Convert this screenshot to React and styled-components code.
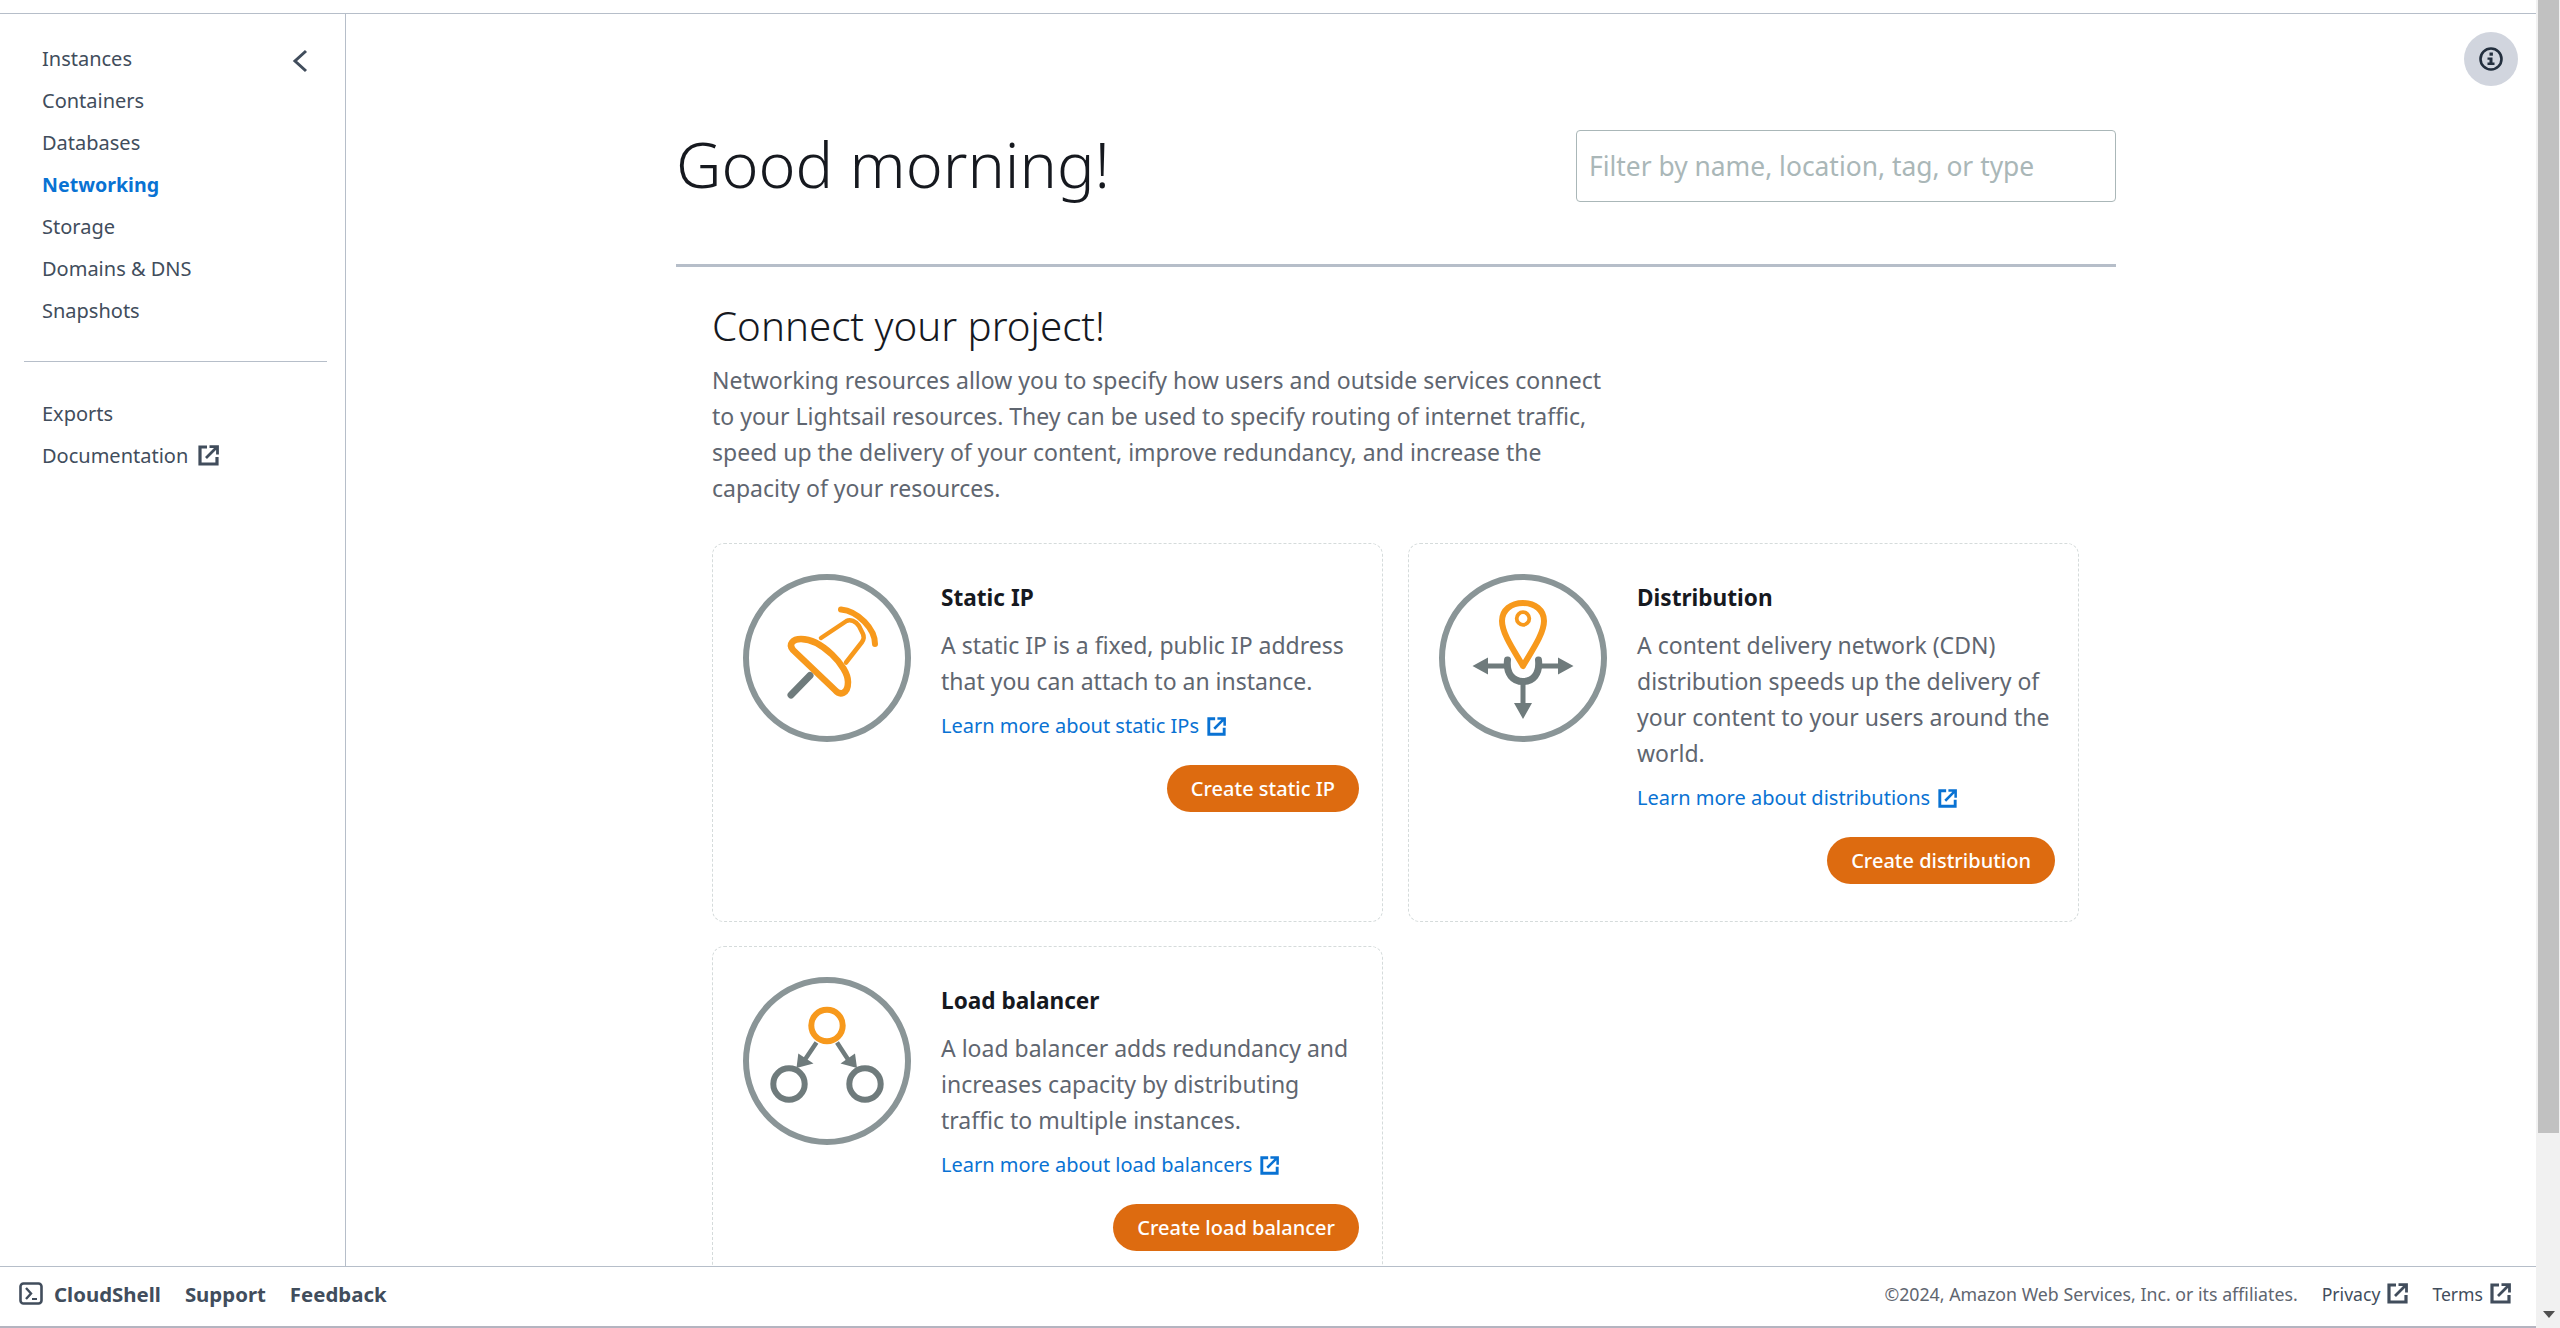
import React from 'react'
import styled, { createGlobalStyle } from 'styled-components'

const GlobalStyle = createGlobalStyle`
	html, body {
		margin: 0;
		padding: 0;
		height: 100%;
		overflow: hidden;
		background: #fff;
	}
	* {
		box-sizing: border-box;
	}
	body {
		font-family: "Noto Sans", "Open Sans", sans-serif;
	}
`

function ExternalIcon({ size = 21 }) {
	return (
		<svg width={size} height={size} viewBox="0 0 21 21" fill="none" stroke="currentColor" strokeWidth="3.2">
			<path d="M9 2H2v17h17v-7" />
			<path d="M8 13L18 3M11.5 1.6h8v8" strokeWidth="2.8" />
		</svg>
	)
}

function StaticIpIcon() {
	return (
		<svg width="168" height="168" viewBox="0 0 168 168" fill="none">
			<circle cx="84" cy="84" r="81" stroke="#8a9597" strokeWidth="6" />
			<path d="M48 121L67 101.5" stroke="#6f7b7c" strokeWidth="7" strokeLinecap="round" />
			<path d="M50 76C45 70 50 65 58 65C78 65 105 92 105 108C105 120 97 122 92 116Z" stroke="#f7991c" strokeWidth="6.5" strokeLinejoin="round" />
			<path d="M78 64L103.5 47C107 45 113 47 116 52L120 60C121.5 63 121 65 119 68L103 88.5" stroke="#f7991c" strokeWidth="4.5" strokeLinecap="round" strokeLinejoin="round" />
			<path d="M98 35.5C115 37 132 55 132 70" stroke="#f7991c" strokeWidth="6" strokeLinecap="round" />
		</svg>
	)
}

function DistributionIcon() {
	return (
		<svg width="168" height="168" viewBox="0 0 168 168" fill="none">
			<circle cx="84" cy="84" r="81" stroke="#8a9597" strokeWidth="6" />
			<path d="M68.5 86C67 100 74 107.5 84 107.5C94 107.5 101 100 99.5 86" stroke="#6f7b7c" strokeWidth="7" strokeLinecap="round" />
			<path d="M46 92H67M101 92H122M84 108V132" stroke="#6f7b7c" strokeWidth="5" />
			<path d="M33.5 92L49 83.5V100.5Z M134.5 92L119 83.5V100.5Z M84 145L75 129H93Z" fill="#6f7b7c" />
			<path d="M84 92C76 78 63 60 63 47C63 36 72 29 84 29C96 29 105 36 105 47C105 60 92 78 84 92Z" stroke="#f7991c" strokeWidth="6" strokeLinejoin="round" />
			<circle cx="84" cy="44.5" r="6.3" stroke="#f7991c" strokeWidth="3.8" />
		</svg>
	)
}

function LoadBalancerIcon() {
	return (
		<svg width="168" height="168" viewBox="0 0 168 168" fill="none">
			<circle cx="84" cy="84" r="81" stroke="#8a9597" strokeWidth="6" />
			<circle cx="84" cy="48.5" r="15.7" stroke="#f7991c" strokeWidth="6" />
			<circle cx="46" cy="107" r="15.7" stroke="#6f7b7c" strokeWidth="6" />
			<circle cx="122" cy="107" r="15.7" stroke="#6f7b7c" strokeWidth="6" />
			<path d="M73.5 65.5L60 85.5M94 65.5L107 85.5" stroke="#6f7b7c" strokeWidth="4.5" />
			<path d="M53.5 91L55.3 76.5L70.5 86.5Z M114 91L112 76.5L97.5 86.5Z" fill="#6f7b7c" />
		</svg>
	)
}

const cards = [
	{
		title: 'Static IP',
		Icon: StaticIpIcon,
		text: 'A static IP is a fixed, public IP address that you can attach to an instance.',
		link: 'Learn more about static IPs',
		action: 'Create static IP',
	},
	{
		title: 'Distribution',
		Icon: DistributionIcon,
		text: 'A content delivery network (CDN) distribution speeds up the delivery of your content to your users around the world.',
		link: 'Learn more about distributions',
		action: 'Create distribution',
	},
	{
		title: 'Load balancer',
		Icon: LoadBalancerIcon,
		text: 'A load balancer adds redundancy and increases capacity by distributing traffic to multiple instances.',
		link: 'Learn more about load balancers',
		action: 'Create load balancer',
	},
]

const navTop = ['Instances', 'Containers', 'Databases', 'Networking', 'Storage', 'Domains & DNS', 'Snapshots']

function App() {
	return (
		<StyledPage>
			<GlobalStyle />
			<StyledWindow>
				<StyledBody>
					<StyledSidebar>
						<StyledCollapse aria-label="Collapse">
							<svg width="16" height="24" viewBox="0 0 16 24" fill="none" stroke="#414d5c" strokeWidth="3">
								<path d="M14 2L3 12l11 10" />
							</svg>
						</StyledCollapse>
						<StyledNavList>
							{navTop.map((item) => (
								<StyledNavItem key={item} $active={item === 'Networking'}>
									{item}
								</StyledNavItem>
							))}
						</StyledNavList>
						<StyledNavDivider />
						<StyledNavList>
							<StyledNavItem>Exports</StyledNavItem>
							<StyledNavItem>
								Documentation <ExternalIcon />
							</StyledNavItem>
						</StyledNavList>
					</StyledSidebar>
					<StyledMain>
						<StyledInfoButton aria-label="Info">
							<svg width="24" height="24" viewBox="0 0 24 24" fill="none">
								<circle cx="12" cy="12" r="10.5" stroke="#232f3e" strokeWidth="2.6" />
								<rect x="10.5" y="5.5" width="3.4" height="3.2" fill="#232f3e" />
								<path d="M8.5 10.5h5v5h2v2.5h-7v-2.5h2v-2.7h-2z" fill="#232f3e" />
							</svg>
						</StyledInfoButton>
						<StyledContent>
							<StyledHeader>
								<StyledGreeting>Good morning!</StyledGreeting>
								<StyledFilter placeholder="Filter by name, location, tag, or type" />
							</StyledHeader>
							<StyledPanel>
								<StyledPanelTitle>Connect your project!</StyledPanelTitle>
								<StyledIntro>
									Networking resources allow you to specify how users and outside services connect to your Lightsail resources. They can be used to specify routing of internet traffic, speed up the delivery of your content, improve redundancy, and increase the capacity of your resources.
								</StyledIntro>
								<StyledCardGrid>
									{cards.map(({ title, Icon, text, link, action }) => (
										<StyledCard key={title}>
											<StyledCardIcon>
												<Icon />
											</StyledCardIcon>
											<StyledCardBody>
												<StyledCardTitle>{title}</StyledCardTitle>
												<StyledCardText>{text}</StyledCardText>
												<StyledCardLink>
													{link} <ExternalIcon size={19} />
												</StyledCardLink>
												<StyledCardAction>{action}</StyledCardAction>
											</StyledCardBody>
										</StyledCard>
									))}
								</StyledCardGrid>
							</StyledPanel>
						</StyledContent>
					</StyledMain>
				</StyledBody>
				<StyledFooter>
					<StyledFooterLeft>
						<svg width="24" height="23" viewBox="0 0 24 23" fill="none" stroke="#414d5c">
							<rect x="1.5" y="1.5" width="21" height="20" rx="3" strokeWidth="2.6" />
							<path d="M7 6l5 5.5L7 17" strokeWidth="2.4" />
							<path d="M13 17h5" strokeWidth="2" />
						</svg>
						<StyledFooterStrong $first>CloudShell</StyledFooterStrong>
						<StyledFooterStrong>Support</StyledFooterStrong>
						<StyledFooterStrong>Feedback</StyledFooterStrong>
					</StyledFooterLeft>
					<StyledFooterRight>
						<StyledCopyright>©2024, Amazon Web Services, Inc. or its affiliates.</StyledCopyright>
						<StyledFooterLink>
							Privacy <ExternalIcon />
						</StyledFooterLink>
						<StyledFooterLink>
							Terms <ExternalIcon />
						</StyledFooterLink>
					</StyledFooterRight>
				</StyledFooter>
			</StyledWindow>
			<StyledScrollbar>
				<StyledThumb />
				<StyledScrollSpace />
				<StyledArrow />
			</StyledScrollbar>
		</StyledPage>
	)
}

const StyledPage = styled.div`
	width: 100%;
	height: 100vh;
	display: flex;
	overflow: hidden;
`
const StyledWindow = styled.div`
	flex: 1;
	min-width: 0;
	display: flex;
	flex-direction: column;
	padding-top: 13px;
	border-bottom: 2px solid #b4b4c0;
`
const StyledBody = styled.div`
	flex: 1;
	min-height: 0;
	display: flex;
	border-top: 1px solid #b6bec9;
`
const StyledSidebar = styled.aside`
	position: relative;
	width: 346px;
	flex-shrink: 0;
	padding: 23px 0 0 42px;
	border-right: 1px solid #b6bec9;
`
const StyledCollapse = styled.button`
	position: absolute;
	top: 35px;
	left: 292px;
	padding: 0;
	border: 0;
	background: none;
	line-height: 0;
`
const StyledNavList = styled.div`
	display: flex;
	flex-direction: column;
`
const StyledNavItem = styled.div`
	height: 42px;
	display: flex;
	align-items: center;
	gap: 10px;
	font-size: ${(props) => (props.$active ? '19.6px' : '20px')};
	font-weight: ${(props) => (props.$active ? 700 : 400)};
	color: ${(props) => (props.$active ? '#0972d3' : '#414d5c')};
`
const StyledNavDivider = styled.div`
	width: 303px;
	height: 1px;
	margin: 30px 0 30px -18px;
	background: #b6bec9;
`
const StyledMain = styled.main`
	position: relative;
	flex: 1;
	min-width: 0;
	overflow: hidden;
`
const StyledInfoButton = styled.button`
	position: absolute;
	top: 18px;
	right: 18px;
	width: 54px;
	height: 54px;
	display: flex;
	align-items: center;
	justify-content: center;
	padding: 0;
	border: 0;
	border-radius: 50%;
	background: #d1d5de;
`
const StyledContent = styled.div`
	width: 1440px;
	margin-left: 330px;
`
const StyledHeader = styled.header`
	height: 253px;
	display: flex;
	align-items: flex-start;
	justify-content: space-between;
	padding-top: 116px;
	border-bottom: 3px solid #b6bec9;
`
const StyledGreeting = styled.h1`
	margin: -10px 0 0;
	font-size: 62.8px;
	font-weight: 300;
	line-height: 88px;
	color: #16191f;
`
const StyledFilter = styled.input`
	width: 540px;
	height: 72px;
	padding: 0 12px;
	border: 1px solid #aab7b8;
	border-radius: 4px;
	outline: none;
	font-family: inherit;
	font-size: 26.4px;
	color: #16191f;

	&::placeholder {
		color: #aab7b8;
	}
`
const StyledPanel = styled.section`
	padding: 31px 36px 0;
`
const StyledPanelTitle = styled.h2`
	margin: 0;
	font-size: 40.3px;
	font-weight: 300;
	line-height: 56px;
	color: #16191f;
`
const StyledIntro = styled.p`
	width: 900px;
	margin: 8px 0 0;
	font-size: 23px;
	line-height: 36px;
	color: #5f6670;
`
const StyledCardGrid = styled.div`
	display: grid;
	grid-template-columns: 671px 671px;
	grid-auto-rows: 379px;
	gap: 24px 25px;
	margin-top: 37px;
`
const StyledCard = styled.article`
	display: flex;
	gap: 30px;
	padding: 30px 23px 0 30px;
	border: 1px dashed #d5dbdb;
	border-radius: 12px;
`
const StyledCardIcon = styled.div`
	flex-shrink: 0;
	width: 168px;
	height: 168px;
`
const StyledCardBody = styled.div`
	flex: 1;
	min-width: 0;
	display: flex;
	flex-direction: column;
`
const StyledCardTitle = styled.h3`
	margin: 8px 0 0;
	font-size: 22.6px;
	font-weight: 700;
	line-height: 32px;
	color: #16191f;
`
const StyledCardText = styled.p`
	margin: 13px 0 0;
	font-size: 23px;
	line-height: 36px;
	color: #5f6670;
`
const StyledCardLink = styled.a`
	display: flex;
	align-items: center;
	gap: 8px;
	margin-top: 9px;
	font-size: 20px;
	line-height: 36px;
	color: #0972d3;
`
const StyledCardAction = styled.button`
	align-self: flex-end;
	height: 47px;
	margin-top: 21px;
	padding: 0 24px;
	border: 0;
	border-radius: 24px;
	background: #dd6b10;
	font-family: inherit;
	font-size: 20px;
	font-weight: 500;
	color: #fff;
`
const StyledFooter = styled.footer`
	height: 60px;
	flex-shrink: 0;
	display: flex;
	align-items: center;
	justify-content: space-between;
	padding: 0 25px 6px 19px;
	border-top: 1px solid #b6bec9;
`
const StyledFooterLeft = styled.div`
	display: flex;
	align-items: center;
	gap: 24px;
	color: #414d5c;
`
const StyledFooterStrong = styled.span`
	margin-left: ${(props) => (props.$first ? '-13px' : '0')};
	font-size: 20.4px;
	font-weight: 700;
`
const StyledFooterRight = styled.div`
	display: flex;
	align-items: center;
	gap: 24px;
`
const StyledCopyright = styled.span`
	font-size: 17.75px;
	color: #5f6670;
`
const StyledFooterLink = styled.span`
	display: flex;
	align-items: center;
	gap: 7px;
	font-size: 17.6px;
	color: #414d5c;
`
const StyledScrollbar = styled.div`
	width: 24px;
	flex-shrink: 0;
	display: flex;
	flex-direction: column;
	padding: 0 1px 0 2px;
	background: #f1f1f1;
`
const StyledThumb = styled.div`
	height: 1133px;
	background: #c1c1c1;
`
const StyledScrollSpace = styled.div`
	flex: 1;
`
const StyledArrow = styled.div`
	align-self: center;
	width: 0;
	height: 0;
	margin-bottom: 10px;
	border-left: 6px solid transparent;
	border-right: 6px solid transparent;
	border-top: 7px solid #505050;
`
export default App
